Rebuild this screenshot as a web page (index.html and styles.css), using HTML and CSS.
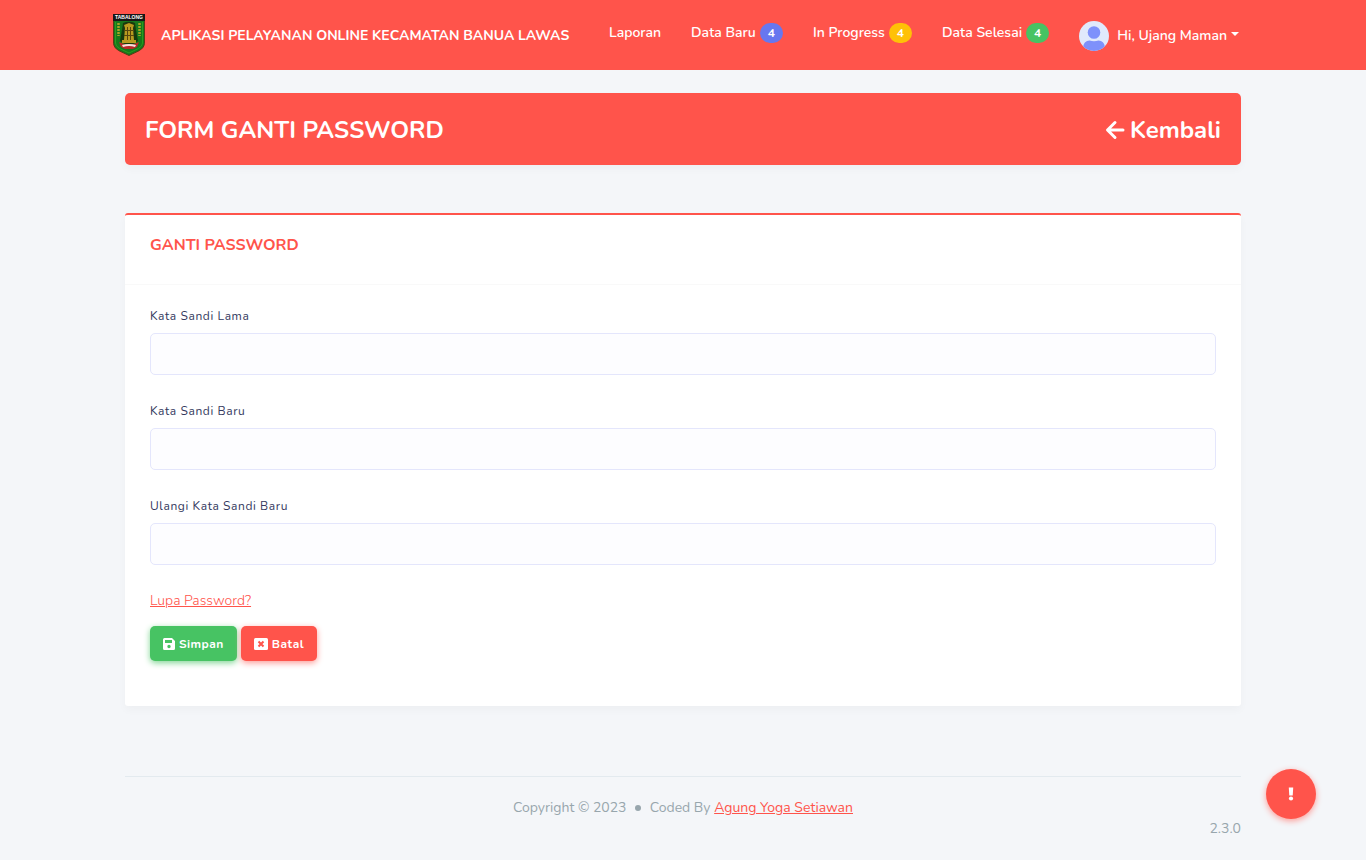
FILE: index.html
```html
<!DOCTYPE html>
<html lang="id">
<head>
<meta charset="utf-8">
<meta name="viewport" content="width=device-width, initial-scale=1">
<title>Form Ganti Password</title>
<link rel="stylesheet" href="styles.css">
</head>
<body>
<header class="navbar">
  <div class="navbar-inner">
    <a class="brand" href="#">
      <svg class="brand-logo" viewBox="0 0 32 42" aria-hidden="true">
        <path d="M.5.5h31v29q0 4-5 7L16 41.5 5.500 36.500Q.5 33.500.5 29.500z" fill="#16781b" stroke="#5b3a16"/>
        <path d="M0 0h32v7H0z" fill="#171717"/>
        <path d="M2.500 8v21q0 3 4 5.500L16 39l9.500-4.500q4-2.500 4-5.500V8" fill="none" stroke="#299b20"/>
        <path d="M10 9q6-2.500 12 0l1 7 2 11-5 3h-8l-5-3 2-11z" fill="#17390d"/>
        <path d="M11 11l5-2 5 2-1 3 1 12h2v3H9v-3h2l1-12z" fill="#b99a20"/>
        <path d="M14 13h1v13h-1zm3 0h1v13h-1zM11 16h10v1H11zm0 5h10v1H11z" fill="#59460d"/>
        <path d="M5.500 9v13M26.500 9v13" stroke="#a5a526" stroke-width="2.500" stroke-dasharray="2 1"/>
        <path d="M6 28l5 2h10l5-2-2 5-4 2h-8l-4-2z" fill="#b82828"/>
        <path d="M9 31q7-2 14 0l-1 2q-6-2-12 0z" fill="#f3e5dc"/>
        <text class="logo-text" x="16" y="5" text-anchor="middle">TABALONG</text>
      </svg>
      <span class="brand-name">APLIKASI PELAYANAN ONLINE KECAMATAN BANUA LAWAS</span>
    </a>
    <nav class="menu">
      <a href="#">Laporan</a>
      <a href="#">Data Baru <span class="badge badge-blue">4</span></a>
      <a href="#">In Progress <span class="badge badge-yellow">4</span></a>
      <a href="#">Data Selesai <span class="badge badge-green">4</span></a>
    </nav>
    <button class="user" type="button" aria-haspopup="true">
      <svg class="avatar" viewBox="0 0 30 30" aria-hidden="true">
        <defs><clipPath id="avatar-clip"><circle cx="15" cy="15" r="15"/></clipPath></defs>
        <g clip-path="url(#avatar-clip)">
          <path d="M0 0h30v30H0z" fill="#e0e9fc"/>
          <circle cx="15" cy="11.500" r="6.300" fill="#7e91fb"/>
          <path d="M4 30v-4q1-6.500 6.500-6.500 4.500 1.500 9 0Q25 19.500 26 26v4z" fill="#7e91fb"/>
        </g>
      </svg>
      <span class="user-name">Hi, Ujang Maman</span><span class="caret"></span>
    </button>
  </div>
</header>
<main class="content">
  <section class="title-bar">
    <h1>FORM GANTI PASSWORD</h1>
    <a class="back" href="#">
      <svg class="back-icon" viewBox="0 0 20 20" aria-hidden="true"><path d="M18 10H3M10 2.500 2.500 10l7.500 7.500" fill="none" stroke="currentColor" stroke-width="3" stroke-linecap="round" stroke-linejoin="round"/></svg>
      Kembali
    </a>
  </section>
  <section class="card">
    <div class="card-header"><h2>GANTI PASSWORD</h2></div>
    <form class="card-body">
      <div class="field"><label for="old">Kata Sandi Lama</label><input id="old" type="password"></div>
      <div class="field"><label for="new">Kata Sandi Baru</label><input id="new" type="password"></div>
      <div class="field"><label for="repeat">Ulangi Kata Sandi Baru</label><input id="repeat" type="password"></div>
      <a class="forgot" href="#">Lupa Password?</a>
      <div class="actions">
        <button class="btn btn-save" type="button">
          <svg class="btn-icon" viewBox="0 0 12 12" aria-hidden="true"><path fill="currentColor" fill-rule="evenodd" d="M1.500 0H9l3 3v7.500q0 1.500-1.500 1.500h-9Q0 12 0 10.500v-9Q0 0 1.500 0zM2 2v3h7V2zm4 4.800a1.700 1.700 0 1 0 0 3.400 1.700 1.700 0 0 0 0-3.400z"/></svg>
          Simpan
        </button>
        <button class="btn btn-cancel" type="button">
          <svg class="btn-icon-wide" viewBox="0 0 14 12" aria-hidden="true"><rect width="14" height="12" rx="1.500" fill="currentColor"/><path d="M4.500 3.500l5 5m0-5L4.500 8.500" stroke="#ff544b" stroke-width="2"/></svg>
          Batal
        </button>
      </div>
    </form>
  </section>
  <footer class="footer">
    <p class="copyright">Copyright © 2023 <span class="bullet"></span> Coded By <a href="#">Agung Yoga Setiawan</a></p>
    <p class="version">2.3.0</p>
  </footer>
</main>
<button class="fab" type="button" aria-label="Info">
  <svg class="fab-icon" viewBox="0 0 6 14" aria-hidden="true"><path d="M.8.5h4.400L4.700 8.500H1.300z" fill="#fff"/><circle cx="3" cy="11.500" r="2.100" fill="#fff"/></svg>
</button>
</body>
</html>
```
FILE: styles.css
```css
* { box-sizing: border-box; }
body {
  margin: 0;
  min-height: 100vh;
  background: #f4f6f9;
  color: #34395e;
  font: 14px/24px Nunito, Lato, sans-serif;
}
h1, h2, p { margin: 0; }
button { font-family: inherit; border: 0; cursor: pointer; }
a { color: #ff544b; }

.navbar { background: #ff544b; color: #fff; }
.navbar-inner {
  display: flex;
  align-items: center;
  max-width: 1140px;
  min-height: 70px;
  margin: 0 auto;
  padding-right: 14px;
  font-weight: 600;
}
.brand { display: flex; align-items: center; gap: 16px; color: #fff; font-weight: 700; text-decoration: none; }
.brand-name { padding-top: 2px; }
.brand-logo { width: 32px; height: 42px; flex: none; }
.logo-text { font: 700 5px "Liberation Sans", sans-serif; fill: #fff; }
.menu { display: flex; gap: 30px; margin-left: auto; padding-bottom: 4px; }
.menu a { display: flex; align-items: center; gap: 4px; color: #fff; text-decoration: none; white-space: nowrap; }
.badge { border-radius: 10px; padding: 0 8px; font-size: 12px; font-weight: 700; line-height: 20px; }
.badge-blue { background: #6777ef; }
.badge-yellow { background: #ffc107; }
.badge-green { background: #47c363; }
.user {
  display: flex;
  align-items: center;
  margin-left: 30px;
  padding: 2px 0 0;
  background: none;
  color: #fff;
  font-size: 14px;
  font-weight: 600;
  white-space: nowrap;
}
.user-name { padding-bottom: 2px; }
.avatar { width: 30px; height: 30px; margin-right: 8px; }
.caret { margin: 0 0 4px 4px; border: 4px solid transparent; border-top-color: #fff; border-bottom: 0; }

.content { max-width: 1140px; margin: 0 auto; padding: 23px 12px 16px; }
.title-bar {
  display: flex;
  align-items: center;
  justify-content: space-between;
  min-height: 72px;
  padding: 21px 20px 19px;
  margin-bottom: 48px;
  border-radius: 5px;
  background: #ff544b;
  color: #fff;
  box-shadow: 0 4px 8px rgba(0, 0, 0, 0.03);
}
.title-bar h1 { font-size: 24px; line-height: 32px; font-weight: 700; }
.back { display: flex; align-items: center; gap: 5px; color: #fff; font-size: 24px; font-weight: 700; text-decoration: none; }
.back-icon { width: 20px; height: 20px; }

.card {
  border-top: 2px solid #ff544b;
  border-radius: 3px;
  background: #fff;
  box-shadow: 0 4px 8px rgba(0, 0, 0, 0.03);
}
.card-header { min-height: 70px; padding: 16px 25px; border-bottom: 1px solid #f9f9f9; }
.card-header h2 { color: #ff544b; font-size: 16px; line-height: 28px; font-weight: 700; }
.card-body { padding: 21px 25px 45px; }
.field { margin-bottom: 26px; }
.field label { display: block; margin-bottom: 7px; font-size: 12px; line-height: 20px; letter-spacing: 0.05em; }
.field input {
  display: block;
  width: 100%;
  height: 42px;
  padding: 10px 15px;
  border: 1px solid #e4e6fc;
  border-radius: 5px;
  background: #fdfdff;
  font: inherit;
}
.forgot { display: block; width: fit-content; font-weight: 300; line-height: 20px; }
.actions { display: flex; gap: 4px; margin-top: 15px; }
.btn {
  display: flex;
  align-items: center;
  gap: 4px;
  height: 35px;
  padding: 0 13px;
  border-radius: 5px;
  color: #fff;
  font-size: 12px;
  font-weight: 700;
  letter-spacing: 0.04em;
}
.btn-save { background: #47c363; box-shadow: 0 2px 6px #81d694; }
.btn-cancel { background: #ff544b; box-shadow: 0 2px 6px #fd9b96; }
.btn-icon { width: 12px; height: 12px; }
.btn-icon-wide { width: 14px; height: 12px; }

.footer { margin-top: 70px; padding-top: 20px; border-top: 1px solid #e3eaef; color: #98a6ad; line-height: 21px; }
.copyright { text-align: center; }
.bullet { display: inline-block; width: 6px; height: 6px; margin: 0 5px 1px; border-radius: 50%; background: #98a6ad; }
.version { text-align: right; }

.fab {
  position: fixed;
  right: 50px;
  bottom: 41px;
  display: flex;
  align-items: center;
  justify-content: center;
  width: 50px;
  height: 50px;
  padding: 0;
  border-radius: 50%;
  background: #ff544b;
  box-shadow: 0 2px 6px #fd9b96;
}
.fab-icon { width: 6px; height: 14px; }
```
